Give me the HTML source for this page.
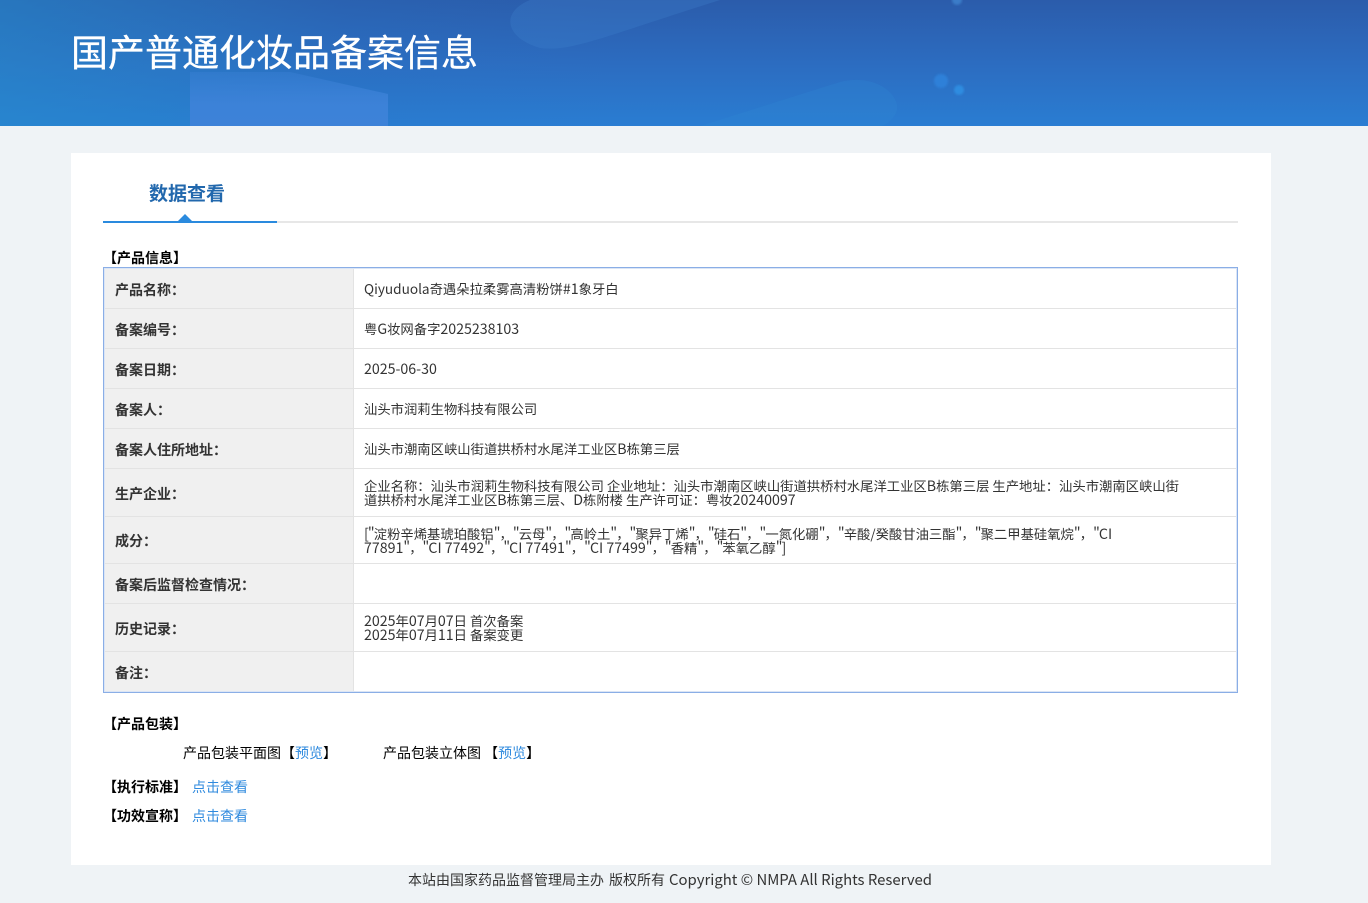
<!DOCTYPE html>
<html lang="zh-CN"><head><meta charset="utf-8"><title>国产普通化妆品备案信息</title>
<style>
html,body{margin:0;padding:0;width:1368px;height:903px;overflow:hidden;background:#eff3f6;}
body{position:relative;font-family:"Noto Sans CJK SC","Liberation Sans",sans-serif;font-size:14px;color:#333;}
.a{position:absolute;white-space:nowrap;}
.hd{position:absolute;left:0;top:0;width:1368px;height:126px;overflow:hidden;background:linear-gradient(90deg,rgba(38,140,205,.55) 0%,rgba(38,120,200,.2) 25%,rgba(38,120,200,0) 45%),linear-gradient(180deg,#2b5cab 0%,#2c6cc0 50%,#2a7dd2 100%);}
.c{position:absolute;left:71px;top:153px;width:1200px;height:712px;background:#fff;}
.l{position:absolute;left:104px;width:250px;background:#f0f0f0;border-right:1px solid #e3e3e3;border-bottom:1px solid #e3e3e3;box-sizing:border-box;}
.r{position:absolute;left:354px;width:882px;border-bottom:1px solid #e3e3e3;box-sizing:border-box;}
.k{position:absolute;left:115px;font-weight:700;color:#333;white-space:nowrap;line-height:20px;}
.v{position:absolute;left:364px;color:#333;white-space:nowrap;line-height:13px;font-size:13.33px;}
.n{font-style:normal;font-size:14.2px;}
.t{font-style:normal;font-size:13.6px;}
.q{font-style:normal;font-size:14.2px;letter-spacing:-.9px;}
.b{font-weight:700;color:#000;line-height:20px;}
.bl{color:#2f8ade;}
</style></head><body>
<div class="hd">
<svg width="1368" height="126" style="position:absolute;left:0;top:0">
<defs><filter id="f"><feGaussianBlur stdDeviation="1"/></filter>
<linearGradient id="g" x1="0" y1="0" x2="0" y2="1"><stop offset="0" stop-color="#3d82d8" stop-opacity=".35"/><stop offset=".6" stop-color="#3d82d8" stop-opacity=".95"/><stop offset="1" stop-color="#3d82d8"/></linearGradient></defs>
<path d="M530 0C500 12 505 38 540 48C570 52 600 38 720 0Z" fill="#3f86d0" opacity=".28"/>
<path d="M190 72L290 72L388 94V126H190Z" fill="url(#g)"/>
<path d="M700 126L840 82C880 72 905 100 895 115C890 122 885 126 880 126Z" fill="#2f8ad4" opacity=".28"/>
<circle cx="941" cy="81" r="7" fill="#2f80d8" filter="url(#f)"/>
<circle cx="959" cy="90" r="5" fill="#2f8ce0" filter="url(#f)"/>
<circle cx="957" cy="0" r="5" fill="#3a7cc8" filter="url(#f)"/>
</svg>
<div class="a" style="left:71px;top:23px;font-size:37px;line-height:54px;color:#fff;-webkit-text-stroke:.3px #fff;">国产普通化妆品备案信息</div>
</div>
<div class="c"></div>
<div class="a" style="left:149px;top:179px;font-size:19px;font-weight:700;line-height:28px;color:#2268ad;">数据查看</div>
<div class="a" style="left:277px;top:221px;width:961px;height:2px;background:#e7e7e7;"></div>
<div class="a" style="left:103px;top:221px;width:174px;height:2px;background:#2a8ade;"></div>
<div class="a" style="left:178px;top:214px;width:0;height:0;border-left:7px solid transparent;border-right:7px solid transparent;border-bottom:7px solid #2a8ade;"></div>
<div class="a b" style="left:103px;top:248px;">【产品信息】</div>

<div class="l" style="top:268px;height:41px"></div><div class="r" style="top:268px;height:41px"></div>
<div class="l" style="top:309px;height:40px"></div><div class="r" style="top:309px;height:40px"></div>
<div class="l" style="top:349px;height:40px"></div><div class="r" style="top:349px;height:40px"></div>
<div class="l" style="top:389px;height:40px"></div><div class="r" style="top:389px;height:40px"></div>
<div class="l" style="top:429px;height:40px"></div><div class="r" style="top:429px;height:40px"></div>
<div class="l" style="top:469px;height:48px"></div><div class="r" style="top:469px;height:48px"></div>
<div class="l" style="top:517px;height:47px"></div><div class="r" style="top:517px;height:47px"></div>
<div class="l" style="top:564px;height:40px"></div><div class="r" style="top:564px;height:40px"></div>
<div class="l" style="top:604px;height:48px"></div><div class="r" style="top:604px;height:48px"></div>
<div class="l" style="top:652px;height:40px;border-bottom:0"></div>
<div class="a" style="left:103px;top:267px;width:1135px;height:426px;border:1px solid #8aaee6;box-shadow:inset 0 0 0 1px #dbe5f5;box-sizing:border-box;"></div>

<div class="k" style="top:280px">产品名称：</div>
<div class="k" style="top:320px">备案编号：</div>
<div class="k" style="top:360px">备案日期：</div>
<div class="k" style="top:400px">备案人：</div>
<div class="k" style="top:440px">备案人住所地址：</div>
<div class="k" style="top:484px">生产企业：</div>
<div class="k" style="top:531px">成分：</div>
<div class="k" style="top:575px">备案后监督检查情况：</div>
<div class="k" style="top:619px">历史记录：</div>
<div class="k" style="top:663px">备注：</div>

<div class="v" style="top:282px"><i class="t">Qiyuduola</i>奇遇朵拉柔雾高清粉饼<i class="n">#1</i>象牙白</div>
<div class="v" style="top:322px">粤<i class="n">G</i>妆网备字<i class="n">2025238103</i></div>
<div class="v" style="top:362px"><i class="n">2025-06-30</i></div>
<div class="v" style="top:402px">汕头市润莉生物科技有限公司</div>
<div class="v" style="top:442px">汕头市潮南区峡山街道拱桥村水尾洋工业区<i class="n">B</i>栋第三层</div>
<div class="v" style="top:479px">企业名称：汕头市润莉生物科技有限公司 企业地址：汕头市潮南区峡山街道拱桥村水尾洋工业区<i class="n">B</i>栋第三层 生产地址：汕头市潮南区峡山街<br>道拱桥村水尾洋工业区<i class="n">B</i>栋第三层、<i class="n">D</i>栋附楼 生产许可证：粤妆<i class="n">20240097</i></div>
<div class="v" style="top:527px"><i class="q">["</i>淀粉辛烯基琥珀酸铝<i class="q">"</i>，<i class="q">"</i>云母<i class="q">"</i>，<i class="q">"</i>高岭土<i class="q">"</i>，<i class="q">"</i>聚异丁烯<i class="q">"</i>，<i class="q">"</i>硅石<i class="q">"</i>，<i class="q">"</i>一氮化硼<i class="q">"</i>，<i class="q">"</i>辛酸/癸酸甘油三酯<i class="q">"</i>，<i class="q">"</i>聚二甲基硅氧烷<i class="q">"</i>，<i class="q">"</i><i class="n">CI</i><br><i class="n">77891</i><i class="q">"</i>，<i class="q">"</i><i class="n">CI 77492</i><i class="q">"</i>，<i class="q">"</i><i class="n">CI 77491</i><i class="q">"</i>，<i class="q">"</i><i class="n">CI 77499</i><i class="q">"</i>，<i class="q">"</i>香精<i class="q">"</i>，<i class="q">"</i>苯氧乙醇<i class="q">"]</i></div>
<div class="v" style="top:614px"><i class="n">2025</i>年<i class="n">07</i>月<i class="n">07</i>日 首次备案<br><i class="n">2025</i>年<i class="n">07</i>月<i class="n">11</i>日 备案变更</div>

<div class="a b" style="left:103px;top:714px;">【产品包装】</div>
<div class="a" style="left:183px;top:743px;line-height:20px;color:#000;">产品包装平面图【<span class="bl">预览</span>】</div>
<div class="a" style="left:383px;top:743px;line-height:20px;color:#000;">产品包装立体图 【<span class="bl">预览</span>】</div>
<div class="a b" style="left:103px;top:777px;">【执行标准】</div>
<div class="a bl" style="left:192px;top:777px;line-height:20px;">点击查看</div>
<div class="a b" style="left:103px;top:806px;">【功效宣称】</div>
<div class="a bl" style="left:192px;top:806px;line-height:20px;">点击查看</div>

<div class="a" style="left:408px;top:870px;line-height:20px;color:#333;">本站由国家药品监督管理局主办</div>
<div class="a" style="left:609px;top:870px;line-height:20px;color:#333;">版权所有</div>
<div class="a" style="left:669px;top:870px;line-height:20px;color:#333;font-size:14.9px;">Copyright © NMPA All Rights Reserved</div>
</body></html>
